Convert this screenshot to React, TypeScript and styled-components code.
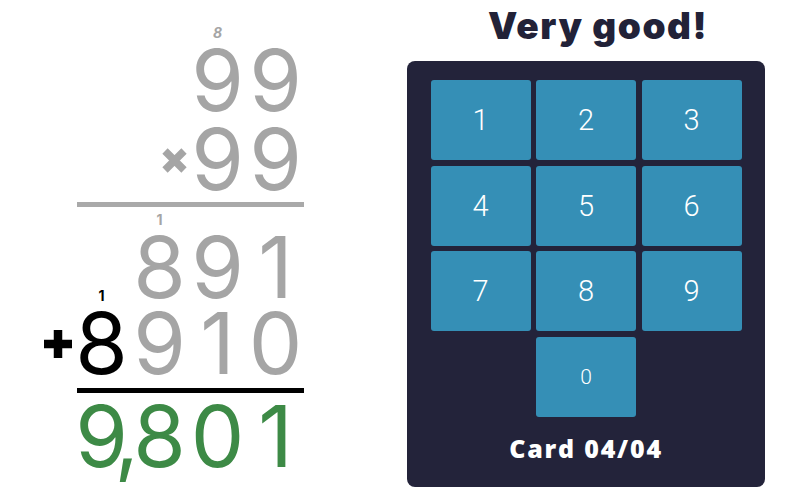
import React from "react";
import styled, { createGlobalStyle } from "styled-components";

const Global = createGlobalStyle`
  html, body { margin: 0; padding: 0; background: #ffffff; }
  body { width: 800px; height: 500px; overflow: hidden; }
`;

const Page = styled.div`
  display: flex;
  width: 800px;
  height: 500px;
`;

const LeftPane = styled.div`
  width: 392px;
  padding-left: 14.5px;
  padding-top: 50px;
  box-sizing: border-box;
  display: flex;
  flex-direction: column;
`;

const Row = styled.div<{ $mt: number }>`
  display: grid;
  grid-template-columns: repeat(5, 58px);
  height: 62px;
  margin-top: ${(p) => p.$mt}px;
  font-family: Inter, "Liberation Sans", sans-serif;
  font-size: 85px;
  font-weight: 400;
  line-height: 62px;
`;

const Digit = styled.span<{ $col: number; $color: string }>`
  grid-column: ${(p) => p.$col};
  grid-row: 1;
  position: relative;
  text-align: center;
  color: ${(p) => p.$color};
`;

const Comma = styled.span`
  position: absolute;
  left: 42px;
  bottom: 0;
  color: #3d8a46;
`;

const Carry = styled.span<{ $color: string; $italic?: boolean }>`
  position: absolute;
  left: 50%;
  transform: translateX(-50%);
  bottom: calc(100% + 12px);
  font-family: Inter, "Liberation Sans", sans-serif;
  font-size: 14px;
  font-weight: 700;
  line-height: 10px;
  font-style: ${(p) => (p.$italic ? "italic" : "normal")};
  color: ${(p) => p.$color};
`;

const Operator = styled.span<{ $col: number }>`
  grid-column: ${(p) => p.$col};
  grid-row: 1;
  display: flex;
  justify-content: flex-end;
  align-items: center;
  padding-right: 1px;
`;

const Rule = styled.div<{ $mt: number; $color: string }>`
  margin-top: ${(p) => p.$mt}px;
  margin-left: 62.5px;
  width: 227px;
  height: 5px;
  background: ${(p) => p.$color};
`;

const RightPane = styled.div`
  width: 358px;
  margin-left: 15px;
  display: flex;
  flex-direction: column;
  align-items: center;
  padding-top: 4px;
`;

const Title = styled.h1`
  margin: 0 0 0 24px;
  font-family: Inter, "Liberation Sans", sans-serif;
  font-weight: 900;
  font-size: 37px;
  line-height: 44px;
  letter-spacing: 1.5px;
  color: #222238;
`;

const Panel = styled.div`
  margin-top: 13px;
  width: 358px;
  box-sizing: border-box;
  padding: 19px 24px 25px;
  background: #23233a;
  border-radius: 8px;
  display: flex;
  flex-direction: column;
  align-items: center;
`;

const Keys = styled.div`
  display: grid;
  grid-template-columns: repeat(3, 100px);
  grid-auto-rows: 80px;
  gap: 5.5px;
`;

const Key = styled.button<{ $small?: boolean; $col?: number }>`
  grid-column: ${(p) => (p.$col ? p.$col : "auto")};
  border: none;
  border-radius: 3px;
  background: #358fb6;
  color: #ffffff;
  font-family: Roboto, "Liberation Sans", sans-serif;
  font-weight: 300;
  font-size: ${(p) => (p.$small ? 21 : 29)}px;
  padding: 0;
  display: flex;
  align-items: center;
  justify-content: center;
`;

const Footer = styled.div`
  margin-top: 17px;
  font-family: "Open Sans", "Liberation Sans", sans-serif;
  font-weight: 800;
  font-size: 25px;
  line-height: 28px;
  color: #ffffff;
  letter-spacing: 1.8px;
`;

const Times = () => (
  <svg width="27" height="27" viewBox="0 0 27 27">
    <path d="M4 4 L23 23 M23 4 L4 23" stroke="#a5a5a5" strokeWidth="7.5" strokeLinecap="butt" />
  </svg>
);

const Plus = () => (
  <svg width="28" height="28" viewBox="0 0 28 28">
    <path d="M14 0 V28 M0 14 H28" stroke="#000000" strokeWidth="8.5" />
  </svg>
);

const GRAY = "#a5a5a5";
const GREEN = "#3d8a46";

export default function App() {
  return (
    <>
      <Global />
      <Page>
        <LeftPane>
          <Row $mt={0}>
            <Digit $col={4} $color={GRAY}>
              9<Carry $color={GRAY} $italic>8</Carry>
            </Digit>
            <Digit $col={5} $color={GRAY}>9</Digit>
          </Row>
          <Row $mt={17}>
            <Operator $col={3}><Times /></Operator>
            <Digit $col={4} $color={GRAY}>9</Digit>
            <Digit $col={5} $color={GRAY}>9</Digit>
          </Row>
          <Rule $mt={11} $color="#a9a9a9" />
          <Row $mt={30}>
            <Digit $col={3} $color={GRAY}>
              8<Carry $color={GRAY}>1</Carry>
            </Digit>
            <Digit $col={4} $color={GRAY}>9</Digit>
            <Digit $col={5} $color={GRAY}>1</Digit>
          </Row>
          <Row $mt={14}>
            <Operator $col={1}><Plus /></Operator>
            <Digit $col={2} $color="#000000">
              8<Carry $color="#000000">1</Carry>
            </Digit>
            <Digit $col={3} $color={GRAY}>9</Digit>
            <Digit $col={4} $color={GRAY}>1</Digit>
            <Digit $col={5} $color={GRAY}>0</Digit>
          </Row>
          <Rule $mt={13} $color="#000000" />
          <Row $mt={13}>
            <Digit $col={2} $color={GREEN}>
              9<Comma>,</Comma>
            </Digit>
            <Digit $col={3} $color={GREEN}>8</Digit>
            <Digit $col={4} $color={GREEN}>0</Digit>
            <Digit $col={5} $color={GREEN}>1</Digit>
          </Row>
        </LeftPane>
        <RightPane>
          <Title>Very good!</Title>
          <Panel>
            <Keys>
              {["1", "2", "3", "4", "5", "6", "7", "8", "9"].map((k) => (
                <Key key={k}>{k}</Key>
              ))}
              <Key $col={2} $small>0</Key>
            </Keys>
            <Footer>Card 04/04</Footer>
          </Panel>
        </RightPane>
      </Page>
    </>
  );
}
